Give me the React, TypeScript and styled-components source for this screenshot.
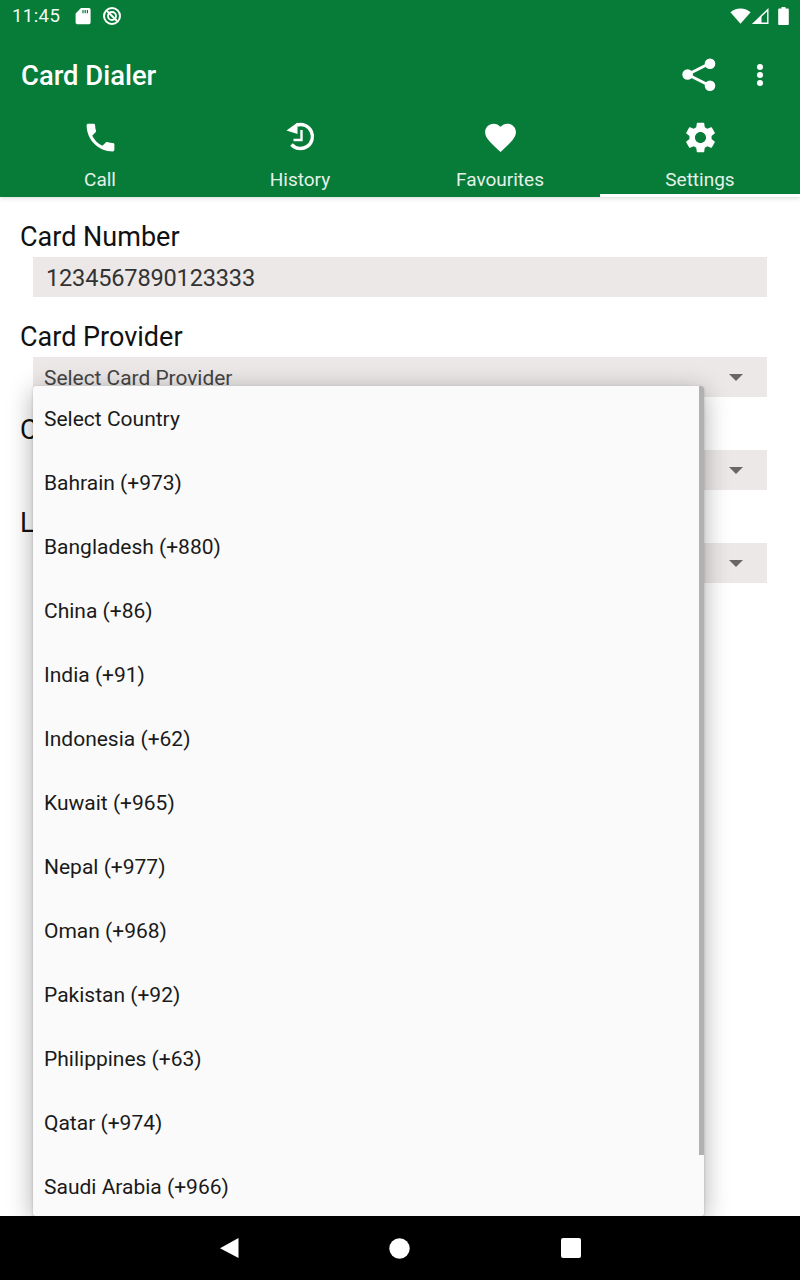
import React from "react";
import styled, { createGlobalStyle } from "styled-components";

const Global = createGlobalStyle`
  html, body { margin: 0; padding: 0; background: #fff; }
  * { box-sizing: border-box; }
  body { font-family: Roboto, "Liberation Sans", sans-serif; }
`;

const Screen = styled.div`
  width: 800px;
  height: 1280px;
  display: flex;
  flex-direction: column;
  overflow: hidden;
  background: #fff;
`;

const Header = styled.header`
  background: #077b38;
  color: #fff;
  height: 197px;
  flex: none;
  display: flex;
  flex-direction: column;
  position: relative;
  z-index: 1;
  box-shadow: 0 1px 5px rgba(0, 0, 0, 0.16);
`;

const StatusBar = styled.div`
  height: 32px;
  display: flex;
  align-items: center;
  padding: 0 11px 0 12px;
`;

const Clock = styled.span`
  font-size: 18.6px;
  letter-spacing: 0.4px;
  width: 63px;
  color: #f1f8f3;
`;

const StatusGroup = styled.div`
  display: flex;
  align-items: center;
`;

const Spacer = styled.div`
  flex: 1;
`;

const Toolbar = styled.div`
  height: 80px;
  display: flex;
  align-items: center;
  padding: 6px 0 0 21px;
`;

const Title = styled.h1`
  margin: 0;
  padding-top: 2px;
  font-size: 27.4px;
  font-weight: 500;
  flex: 1;
`;

const ShareSlot = styled.div`
  display: flex;
  align-items: center;
  justify-content: center;
  width: 34px;
`;

const MoreSlot = styled.div`
  display: flex;
  align-items: center;
  justify-content: center;
  width: 16px;
  margin: 0 32px 0 36px;
`;

const Tabs = styled.nav`
  height: 85px;
  display: grid;
  grid-template-columns: repeat(4, 1fr);
`;

const Tab = styled.div<{ $active?: boolean }>`
  display: flex;
  flex-direction: column;
  align-items: center;
  padding-top: 7px;
  border-bottom: 3px solid ${(p) => (p.$active ? "#fff" : "transparent")};
`;

const TabLabel = styled.span`
  font-size: 19px;
  line-height: 22px;
  margin-top: 13px;
  color: #e4f1e9;
`;

const Content = styled.main`
  position: relative;
  flex: 1;
  min-height: 0;
  padding: 20px 33px 0 20px;
  display: flex;
  flex-direction: column;
`;

const Label = styled.div<{ $gap?: number }>`
  font-size: 27px;
  height: 40px;
  line-height: 41px;
  color: #111;
  margin-top: ${(p) => p.$gap ?? 0}px;
`;

const Field = styled.div`
  height: 40px;
  margin-left: 13px;
  background: #ece8e8;
  display: flex;
  align-items: center;
  overflow: hidden;
`;

const NumberValue = styled.span`
  font-size: 23.6px;
  letter-spacing: -0.2px;
  padding: 2px 0 0 13px;
  color: #333;
`;

const SelectValue = styled.span`
  font-size: 20.9px;
  padding: 2px 0 0 11px;
  color: #444;
`;

const Caret = styled.span`
  width: 0;
  height: 0;
  margin: 0 24px 0 auto;
  border-left: 7px solid transparent;
  border-right: 7px solid transparent;
  border-top: 7px solid #6a6666;
`;

const Popup = styled.div`
  position: absolute;
  left: 33px;
  top: 189px;
  width: 671px;
  height: 830px;
  background: #fafafa;
  border-radius: 3px;
  box-shadow: 0 5px 26px rgba(0, 0, 0, 0.32), 0 1px 3px rgba(0, 0, 0, 0.18);
  overflow: hidden;
  z-index: 2;
`;

const Scrollbar = styled.div`
  position: absolute;
  right: 0;
  top: 0;
  width: 5px;
  height: 769px;
  background: #b1b1b1;
`;

const Option = styled.div`
  height: 64px;
  display: flex;
  align-items: center;
  padding: 2px 0 0 11px;
  font-size: 21px;
  color: #1a1a1a;
`;

const NavBar = styled.footer`
  height: 64px;
  flex: none;
  background: #000;
  position: relative;
  z-index: 3;
  display: grid;
  grid-template-columns: 229px 171px 171px;
  justify-content: start;
  align-items: center;
`;

const NavSlot = styled.div`
  display: flex;
  justify-content: flex-end;
  transform: translateX(10px);
`;

const Ic = styled.svg`
  display: block;
  flex: none;
`;

const SdIcon = styled(Ic)`
  margin-right: 11px;
`;

const WifiIcon = styled(Ic)`
  margin-right: 1px;
`;

const SignalIcon = styled(Ic)`
  margin-right: 9px;
`;

const SD = () => (
  <SdIcon width="16" height="18" viewBox="0 0 16 18">
    <path fill="#fff" d="M6 1h8a1.6 1.6 0 0 1 1.6 1.6v13A1.6 1.6 0 0 1 14 17.2H2A1.6 1.6 0 0 1 .6 15.6V6.4z" />
    <path fill="#077b38" d="M7.4 3h1.2v3.2H7.4zM9.6 3h1.2v3.2H9.6zM11.8 3H13v3.2h-1.2z" />
  </SdIcon>
);

const DataSaver = () => (
  <Ic width="20" height="20" viewBox="0 0 20 20">
    <circle cx="10" cy="10" r="8" fill="none" stroke="#fff" strokeWidth="2" />
    <circle cx="10" cy="10" r="4" fill="none" stroke="#fff" strokeWidth="1.8" />
    <path stroke="#fff" strokeWidth="2" d="M5 5l10 10" />
  </Ic>
);

const Wifi = () => (
  <WifiIcon width="21" height="16" viewBox="0 0 21 16">
    <path fill="#fff" d="M10.5 15.8 0.4 4.2C3 1.8 6.5.4 10.5.4s7.5 1.4 10.1 3.8z" />
  </WifiIcon>
);

const Signal = () => (
  <SignalIcon width="17" height="16" viewBox="0 0 17 16">
    <path fill="none" stroke="#fff" strokeWidth="1.4" d="M1.7 15.2 15.8 1.7v13.5z" />
    <path fill="#fff" d="M1.7 15.2 9.5 7.7v7.5z" />
  </SignalIcon>
);

const Battery = () => (
  <Ic width="11" height="18" viewBox="0 0 11 18">
    <path fill="#fff" d="M3.5 0h4v1.6h2.2c.7 0 1.1.5 1.1 1.1V17c0 .6-.4 1-1 1H1.2c-.6 0-1-.4-1-1V2.7c0-.6.4-1.1 1-1.1h2.3z" />
  </Ic>
);

const Share = () => (
  <Ic width="34" height="34" viewBox="0 0 34 34">
    <path stroke="#fff" strokeWidth="3" fill="none" d="M5.5 16.5 27.5 5.5M5.5 16.5l22 11" />
    <circle cx="5.6" cy="16.5" r="5.3" fill="#fff" />
    <circle cx="28" cy="5.7" r="5.3" fill="#fff" />
    <circle cx="28" cy="27.7" r="5.3" fill="#fff" />
  </Ic>
);

const More = () => (
  <Ic width="8" height="24" viewBox="0 0 8 24">
    <circle cx="4" cy="4" r="3" fill="#fff" />
    <circle cx="4" cy="12" r="3" fill="#fff" />
    <circle cx="4" cy="20" r="3" fill="#fff" />
  </Ic>
);

const PathIcon = ({ d }: { d: string }) => (
  <Ic width="37" height="37" viewBox="0 0 24 24">
    <path fill="#fff" d={d} />
  </Ic>
);

const HistoryIcon = () => (
  <Ic width="37" height="37" viewBox="0 0 37 37">
    <path fill="none" stroke="#fff" strokeWidth="3.4" d="M15 6A12 12 0 1 1 9.5 25.5" />
    <path fill="#fff" d="M4.5 11.5 15.5 3.5V15z" />
    <path fill="none" stroke="#fff" strokeWidth="2.4" d="M19.5 11v10h-8" />
  </Ic>
);

const PHONE =
  "M6.62 10.79c1.44 2.83 3.76 5.14 6.59 6.59l2.2-2.2c.27-.27.67-.36 1.02-.24 1.12.37 2.33.57 3.57.57.55 0 1 .45 1 1V20c0 .55-.45 1-1 1-9.39 0-17-7.61-17-17 0-.55.45-1 1-1h3.5c.55 0 1 .45 1 1 0 1.25.2 2.45.57 3.57.11.35.03.74-.25 1.02l-2.2 2.2z";
const HEART =
  "M12 21.35l-1.45-1.32C5.4 15.36 2 12.28 2 8.5 2 5.42 4.42 3 7.5 3c1.74 0 3.41.81 4.5 2.09C13.09 3.81 14.76 3 16.5 3 19.58 3 22 5.42 22 8.5c0 3.78-3.4 6.86-8.55 11.54L12 21.35z";
const GEAR =
  "M19.14 12.94c.04-.3.06-.61.06-.94 0-.32-.02-.64-.07-.94l2.03-1.58a.49.49 0 0 0 .12-.61l-1.92-3.32a.488.488 0 0 0-.59-.22l-2.39.96c-.5-.38-1.03-.7-1.62-.94l-.36-2.54a.484.484 0 0 0-.48-.41h-3.84c-.24 0-.43.17-.47.41l-.36 2.54c-.59.24-1.13.57-1.62.94l-2.39-.96c-.22-.08-.47 0-.59.22L2.74 8.87c-.12.21-.08.47.12.61l2.03 1.58c-.05.3-.09.63-.09.94s.02.64.07.94l-2.03 1.58a.49.49 0 0 0-.12.61l1.92 3.32c.12.22.37.29.59.22l2.39-.96c.5.38 1.03.7 1.62.94l.36 2.54c.05.24.24.41.48.41h3.84c.24 0 .44-.17.47-.41l.36-2.54c.59-.24 1.13-.56 1.62-.94l2.39.96c.22.08.47 0 .59-.22l1.92-3.32c.12-.22.07-.47-.12-.61l-2.01-1.58zM12 15.6c-1.98 0-3.6-1.62-3.6-3.6s1.62-3.6 3.6-3.6 3.6 1.62 3.6 3.6-1.62 3.6-3.6 3.6z";

const countries = [
  "Select Country",
  "Bahrain (+973)",
  "Bangladesh (+880)",
  "China (+86)",
  "India (+91)",
  "Indonesia (+62)",
  "Kuwait (+965)",
  "Nepal (+977)",
  "Oman (+968)",
  "Pakistan (+92)",
  "Philippines (+63)",
  "Qatar (+974)",
  "Saudi Arabia (+966)",
];

export default function App() {
  return (
    <Screen>
      <Global />
      <Header>
        <StatusBar>
          <Clock>11:45</Clock>
          <StatusGroup>
            <SD />
            <DataSaver />
          </StatusGroup>
          <Spacer />
          <StatusGroup>
            <Wifi />
            <Signal />
            <Battery />
          </StatusGroup>
        </StatusBar>
        <Toolbar>
          <Title>Card Dialer</Title>
          <ShareSlot>
            <Share />
          </ShareSlot>
          <MoreSlot>
            <More />
          </MoreSlot>
        </Toolbar>
        <Tabs>
          <Tab>
            <PathIcon d={PHONE} />
            <TabLabel>Call</TabLabel>
          </Tab>
          <Tab>
            <HistoryIcon />
            <TabLabel>History</TabLabel>
          </Tab>
          <Tab>
            <PathIcon d={HEART} />
            <TabLabel>Favourites</TabLabel>
          </Tab>
          <Tab $active>
            <PathIcon d={GEAR} />
            <TabLabel>Settings</TabLabel>
          </Tab>
        </Tabs>
      </Header>
      <Content>
        <Label>Card Number</Label>
        <Field>
          <NumberValue>1234567890123333</NumberValue>
        </Field>
        <Label $gap={20}>Card Provider</Label>
        <Field>
          <SelectValue>Select Card Provider</SelectValue>
          <Caret />
        </Field>
        <Label $gap={13}>C</Label>
        <Field>
          <Caret />
        </Field>
        <Label $gap={13}>L</Label>
        <Field>
          <Caret />
        </Field>
        <Popup>
          {countries.map((c) => (
            <Option key={c}>{c}</Option>
          ))}
          <Scrollbar />
        </Popup>
      </Content>
      <NavBar>
        <NavSlot>
          <Ic width="20" height="22" viewBox="0 0 20 22">
            <path fill="#fff" d="M19.5 1v20L1 11.2z" />
          </Ic>
        </NavSlot>
        <NavSlot>
          <Ic width="21" height="21" viewBox="0 0 21 21">
            <circle cx="10.5" cy="10.5" r="10.2" fill="#fff" />
          </Ic>
        </NavSlot>
        <NavSlot>
          <Ic width="20" height="20" viewBox="0 0 20 20">
            <rect width="20" height="20" rx="2" fill="#fff" />
          </Ic>
        </NavSlot>
      </NavBar>
    </Screen>
  );
}
